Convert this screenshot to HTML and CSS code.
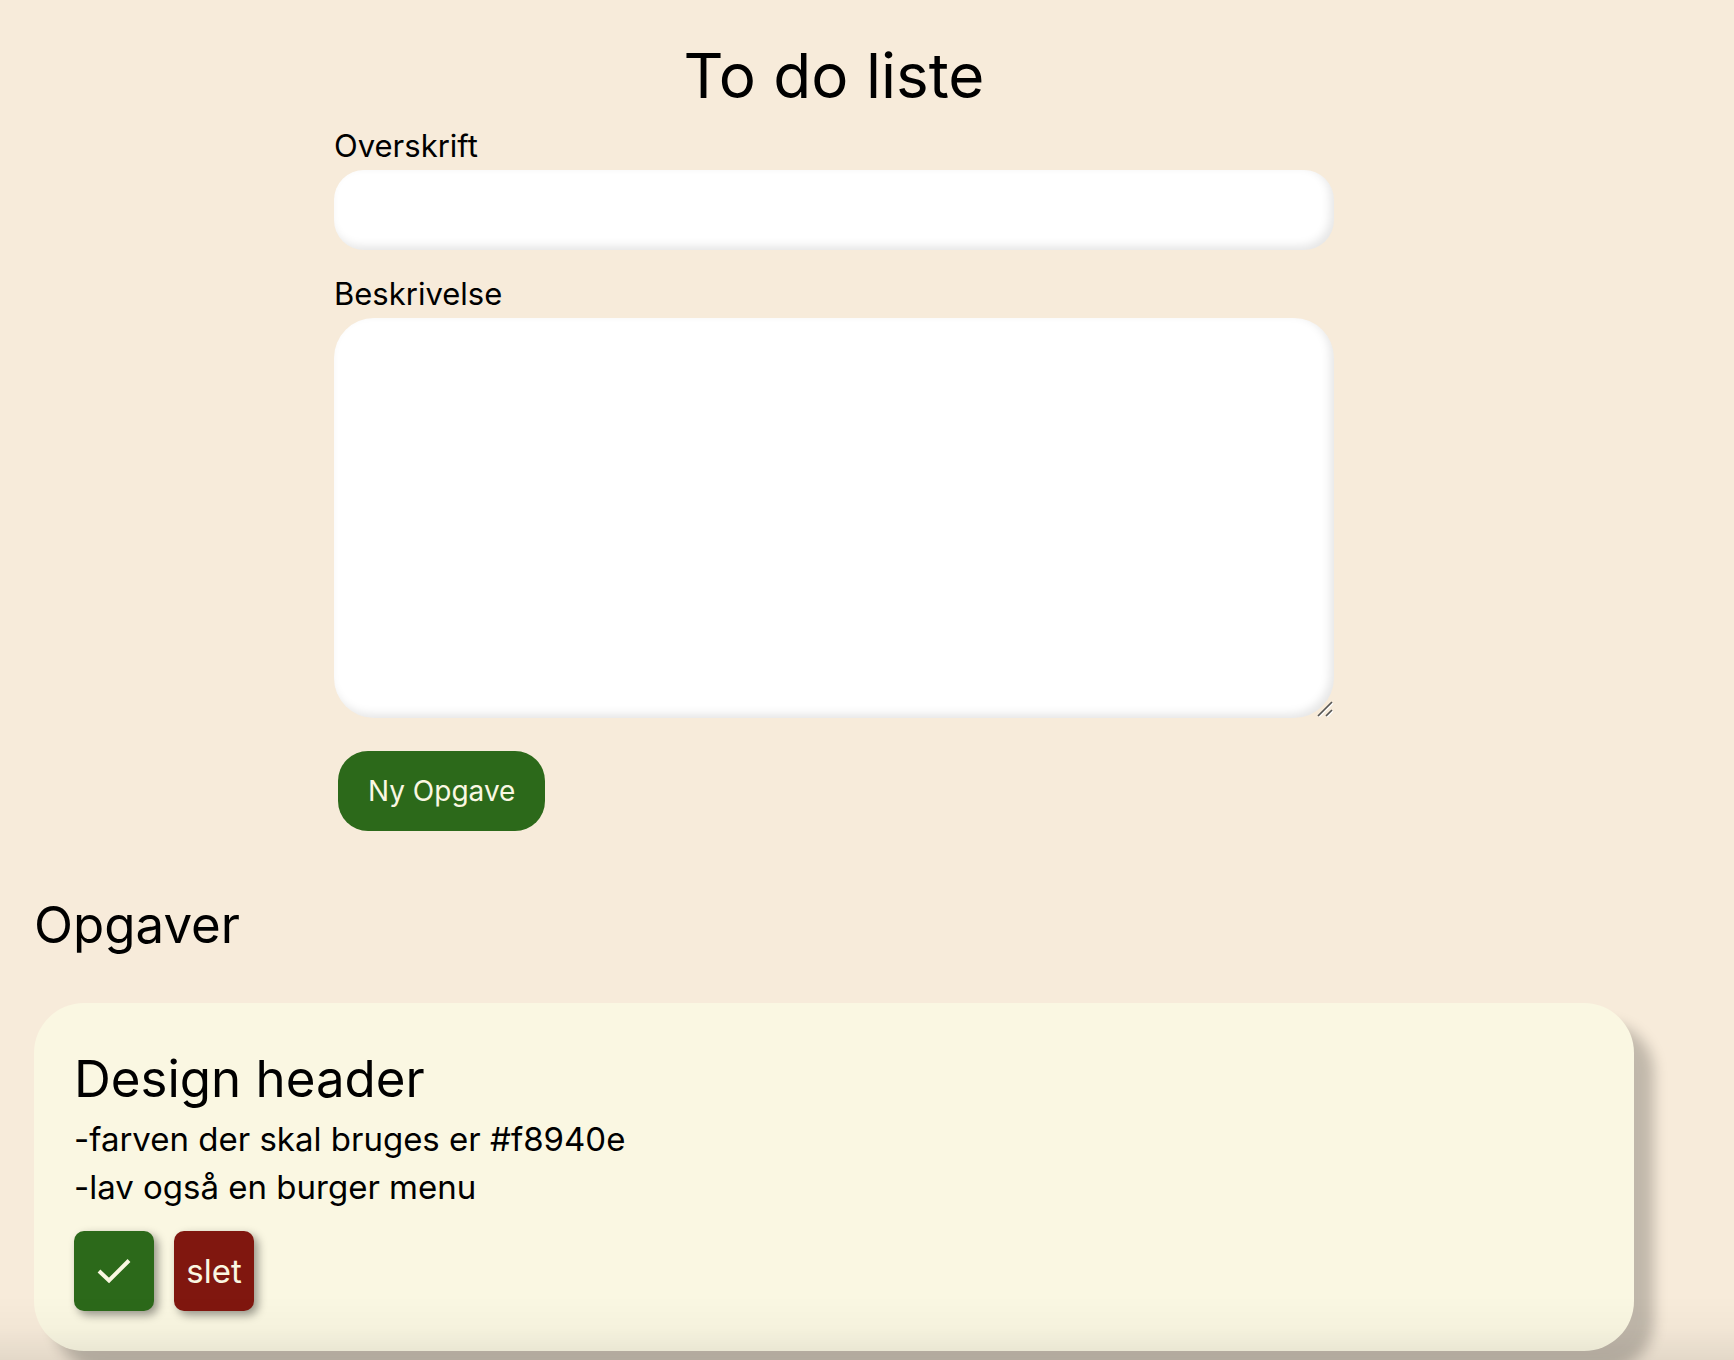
FILE: index.html
```
<!DOCTYPE html>
<html lang="da">
<head>
<meta charset="utf-8">
<title>To do liste</title>
<link rel="stylesheet" href="styles.css">
</head>
<body>
<main class="page">
  <h1 class="title">To do liste</h1>
  <form class="form">
    <label class="label" for="heading">Overskrift</label>
    <input class="field" id="heading" type="text">
    <label class="label" for="description">Beskrivelse</label>
    <div class="area-wrap">
      <textarea class="field field-area" id="description"></textarea>
      <svg class="grip" viewBox="0 0 16 16" aria-hidden="true">
        <path d="M2 16 16 2M10 16l6-6" stroke="#fff" stroke-width="1.5"/>
        <path d="M1 15 15 1M9 15l6-6" stroke="#555" stroke-width="1.700"/>
      </svg>
    </div>
    <button class="submit" type="button">Ny Opgave</button>
  </form>
  <h2 class="subtitle">Opgaver</h2>
  <article class="card">
    <h2 class="card-title">Design header</h2>
    <p class="text">-farven der skal bruges er #f8940e<br>-lav også en burger menu</p>
    <div class="actions">
      <button class="action done" type="button" aria-label="Færdig">
        <svg class="check" viewBox="0 0 34 26" aria-hidden="true"><path d="M2 13 12 22.500 32 2.500" fill="none" stroke="#faf7e2" stroke-width="4"/></svg>
      </button>
      <button class="action delete" type="button">slet</button>
    </div>
  </article>
</main>
</body>
</html>
```
FILE: styles.css
```
* {
  box-sizing: border-box;
}

body {
  margin: 0;
  min-height: 100vh;
  background: #f7ebda;
  color: #000;
  font-family: Inter, "Open Sans", sans-serif;
  font-size: 33px;
  font-weight: 400;
  line-height: 48px;
}

body::after {
  content: "";
  position: fixed;
  inset: auto 0 0;
  height: 64px;
  background: linear-gradient(transparent, rgba(0, 0, 0, 0.02) 50%, rgba(0, 0, 0, 0.08));
  pointer-events: none;
}

.page {
  padding: 29px 100px 9px 34px;
}

.title,
.subtitle,
.card-title,
.text {
  margin: 0;
  font-weight: 400;
}

.title {
  font-size: 62px;
  line-height: 93px;
  text-align: center;
}

.form {
  display: flex;
  flex-direction: column;
  max-width: 1000px;
  margin: 0 auto;
}

.label {
  font-size: 31px;
}

.field {
  display: block;
  width: 100%;
  height: 80px;
  margin: 0 0 20px;
  padding: 0 30px;
  border: 0;
  border-radius: 30px;
  background: #fff;
  box-shadow: inset -4px -4px 10px rgba(0, 0, 0, 0.1);
  font: inherit;
}

.area-wrap {
  position: relative;
}

.field-area {
  height: 400px;
  margin: 0;
  padding: 30px;
  border-radius: 40px;
  resize: none;
}

.grip {
  position: absolute;
  right: 1px;
  bottom: 1px;
  width: 16px;
  height: 16px;
}

.submit {
  align-self: flex-start;
  height: 80px;
  margin: 33px 4px 0;
  padding: 0 30px;
  border: 0;
  border-radius: 30px;
  background: #2c691a;
  color: #faf7e2;
  font: inherit;
  font-size: 28px;
}

.subtitle,
.card-title {
  font-size: 51px;
  line-height: 72px;
}

.subtitle {
  margin: 58px 0 42px;
}

.card {
  padding: 40px;
  border-radius: 50px;
  background: #faf7e2;
  box-shadow: 20px 20px 14px rgba(0, 0, 0, 0.22);
}

.actions {
  display: flex;
  gap: 20px;
  margin-top: 20px;
}

.action {
  display: flex;
  align-items: center;
  justify-content: center;
  width: 80px;
  height: 80px;
  padding: 0;
  border: 0;
  border-radius: 10px;
  box-shadow: 4px 4px 10px rgba(0, 0, 0, 0.4);
  color: #faf7e2;
  font: inherit;
}

.done {
  background: #2c691a;
}

.delete {
  background: #80170f;
}

.check {
  width: 34px;
  height: 26px;
}
```
